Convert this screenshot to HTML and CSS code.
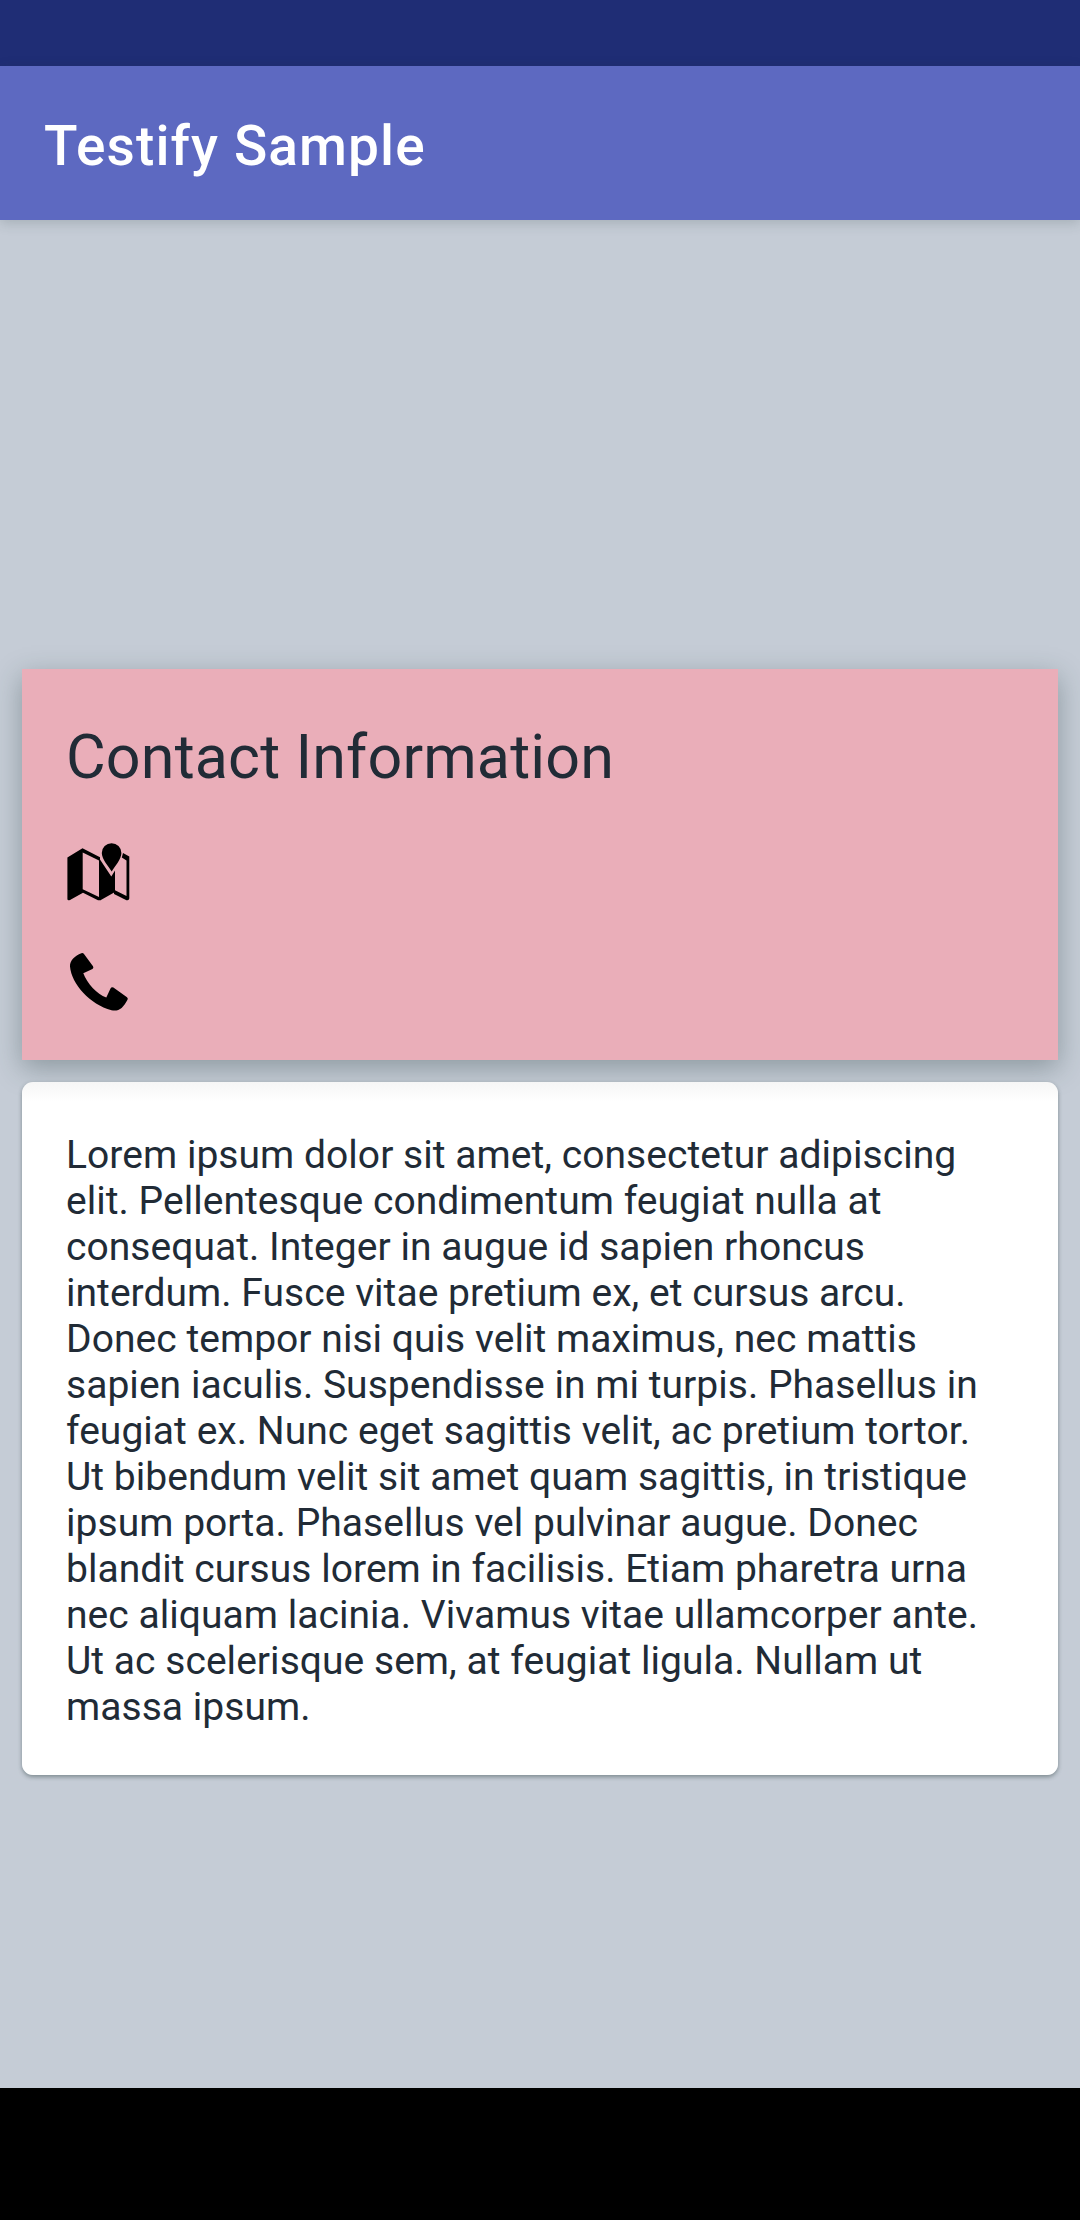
FILE: index.html
```html
<!DOCTYPE html>
<html lang="en">
<head>
<meta charset="utf-8">
<title>Testify Sample</title>
<link rel="stylesheet" href="styles.css">
</head>
<body>
<div class="screen">
  <div class="status-bar"></div>
  <header class="app-bar"><h1 class="app-title">Testify Sample</h1></header>
  <main class="content">
    <section class="contact-card">
      <h2 class="contact-title">Contact Information</h2>
      <svg class="icon" viewBox="0 0 66 66">
        <path fill-rule="evenodd" d="M1.4 15.5 16.5 6.2 34 15.2V58.2H32L17 50.8 4 58Q1.4 58.8 1.4 57ZM16.7 10.6V47.2L33 55V18.6Z"/>
        <path d="M33 16 45.3 34.5 49 28.5V50L34 58.4Z"/>
        <path d="M57 11 63.3 14.6V56.5Q63 58.8 60.5 58.2L48 52V47.8L60.5 54V18.4L55.8 15.6Z"/>
        <path d="M45.7 29.4C42.5 24.5 35.8 17.2 35.8 11A9.8 9.8 0 0 1 55.4 11C55.4 17.2 48.8 24.5 45.7 29.4Z"/>
      </svg>
      <svg class="icon" viewBox="0 0 66 66">
        <path d="M15.3 4.3Q16.8 3.5 17.8 4.8L27 17.3Q28 18.8 26.5 20L17.3 24.3C21 34 31 45.5 40.3 48.6L44.5 39.5Q45.5 37.5 47.4 38.5L61 48.2Q62.3 49.2 61.5 50.7C57 59 53 62.7 45.5 61.3C24 55.5 5.5 35 4 17.5C3.7 11.5 9 7 15.3 4.3Z"/>
      </svg>
    </section>
    <section class="text-card">
      <p class="text">Lorem ipsum dolor sit amet, consectetur adipiscing<br>elit. Pellentesque condimentum feugiat nulla at<br>consequat. Integer in augue id sapien rhoncus<br>interdum. Fusce vitae pretium ex, et cursus arcu.<br>Donec tempor nisi quis velit maximus, nec mattis<br>sapien iaculis. Suspendisse in mi turpis. Phasellus in<br>feugiat ex. Nunc eget sagittis velit, ac pretium tortor.<br>Ut bibendum velit sit amet quam sagittis, in tristique<br>ipsum porta. Phasellus vel pulvinar augue. Donec<br>blandit cursus lorem in facilisis. Etiam pharetra urna<br>nec aliquam lacinia. Vivamus vitae ullamcorper ante.<br>Ut ac scelerisque sem, at feugiat ligula. Nullam ut<br>massa ipsum.</p>
    </section>
  </main>
  <div class="nav-bar"></div>
</div>
</body>
</html>
```
FILE: styles.css
```css
* { box-sizing: border-box; }
body { margin: 0; font-family: Roboto, sans-serif; color: #212b36; }
h1, h2, p { margin: 0; white-space: nowrap; }
.screen { display: flex; flex-direction: column; height: 2220px; overflow: hidden; background: #c5ccd6; }
.status-bar { height: 66px; background: #1f2d75; }
.app-bar { height: 154px; padding: 48px 44px 0; background: #5d69c1; box-shadow: 0 3px 12px rgba(40, 60, 60, .2); }
.app-title { color: #fff; font-size: 55px; font-weight: 500; line-height: 64px; letter-spacing: 1.1px; }
.content { flex: 1; display: flex; flex-direction: column; gap: 22px; padding: 449px 22px 0; }
.contact-card { display: flex; flex-direction: column; height: 391px; padding: 52px 44px 0; background: #eaaeb9; box-shadow: 0 8px 26px rgba(40, 60, 60, .36); }
.contact-title { font-size: 61px; font-weight: 400; line-height: 72px; margin-bottom: 49px; letter-spacing: .15px; }
.icon { width: 66px; height: 66px; margin-bottom: 41px; flex: none; }
.text-card { height: 693px; padding: 50px 44px 0; border-radius: 11px; background: linear-gradient(#f6f6f6, #fff 20px); box-shadow: 0 2px 4px rgba(40, 60, 60, .45); }
.text { font-size: 39px; line-height: 46px; letter-spacing: .04px; }
.nav-bar { height: 132px; background: #000; }
```
